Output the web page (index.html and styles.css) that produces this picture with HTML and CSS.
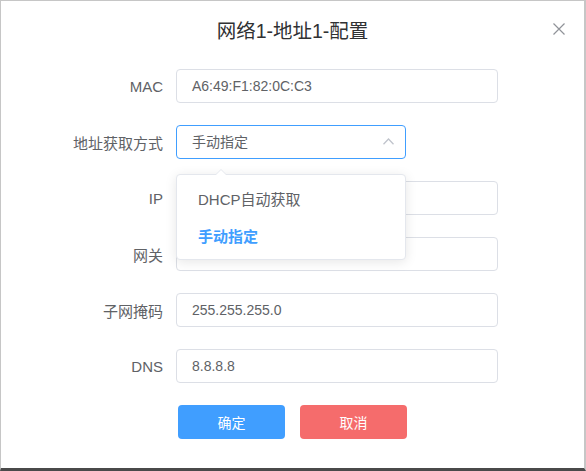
FILE: index.html
```html
<!DOCTYPE html>
<html lang="zh-CN">
<head>
<meta charset="utf-8">
<title>网络1-地址1-配置</title>
<link rel="stylesheet" href="styles.css">
</head>
<body>
<div class="dialog">
  <div class="dialog-header">
    <span class="dialog-title">网络1-地址1-配置</span>
    <button class="close-btn" aria-label="关闭">
      <svg width="12" height="12" viewBox="0 0 12 12"><path d="M0.5 0.5L11.5 11.5M11.5 0.5L0.5 11.5" stroke="#909399" stroke-width="1.2" fill="none"/></svg>
    </button>
  </div>
  <div class="form">
    <div class="form-row">
      <label class="form-label">MAC</label>
      <div class="input">A6:49:F1:82:0C:C3</div>
    </div>
    <div class="form-row">
      <label class="form-label">地址获取方式</label>
      <div class="select-wrap">
        <div class="input select is-focus">
          <span>手动指定</span>
          <svg class="chevron" width="11" height="7" viewBox="0 0 11 7"><path d="M0.5 6.2L5.5 1L10.5 6.2" stroke="#c0c4cc" stroke-width="1.3" fill="none"/></svg>
        </div>
        <div class="dropdown">
          <span class="dropdown-arrow"></span>
          <ul class="dropdown-list">
            <li class="dropdown-item">DHCP自动获取</li>
            <li class="dropdown-item is-selected">手动指定</li>
          </ul>
        </div>
      </div>
    </div>
    <div class="form-row">
      <label class="form-label">IP</label>
      <div class="input"></div>
    </div>
    <div class="form-row">
      <label class="form-label">网关</label>
      <div class="input"></div>
    </div>
    <div class="form-row">
      <label class="form-label">子网掩码</label>
      <div class="input">255.255.255.0</div>
    </div>
    <div class="form-row">
      <label class="form-label">DNS</label>
      <div class="input">8.8.8.8</div>
    </div>
    <div class="footer">
      <button class="btn btn-primary">确定</button>
      <button class="btn btn-danger">取消</button>
    </div>
  </div>
</div>
</body>
</html>
```
FILE: styles.css
```css
* { box-sizing: border-box; }
html, body { margin: 0; padding: 0; background: #ffffff; }
body {
  font-family: "Liberation Sans", "Noto Sans CJK SC", sans-serif;
  color: #606266;
}
.dialog {
  position: relative;
  width: 586px;
  height: 471px;
  background: #fff;
  border-top: 1px solid #c6c6c6;
  border-left: 1px solid #c6c6c6;
  border-right: 2px solid #c6c6c6;
  border-bottom: 3px solid #4a4a4a;
}
.dialog-header {
  padding-top: 18px;
  text-align: center;
  height: 42px;
}
.dialog-title {
  font-size: 19.5px;
  line-height: 24px;
  color: #303133;
}
.close-btn {
  position: absolute;
  top: 22px;
  right: 19px;
  width: 12px;
  height: 12px;
  padding: 0;
  border: 0;
  background: none;
  display: flex;
}
.form {
  padding-top: 26px;
}
.form-row {
  display: flex;
  align-items: center;
  height: 34px;
  margin-bottom: 22px;
}
.form-label {
  width: 175px;
  padding-right: 13px;
  text-align: right;
  font-size: 15px;
  color: #606266;
}
.input {
  width: 322px;
  height: 34px;
  border: 1px solid #dcdfe6;
  border-radius: 4px;
  padding: 0 15px;
  font-size: 14px;
  line-height: 32px;
  color: #606266;
}
.select-wrap {
  position: relative;
}
.select {
  width: 230px;
  display: flex;
  align-items: center;
  justify-content: space-between;
  padding-right: 11px;
}
.select.is-focus { border-color: #409eff; }
.chevron { display: block; margin-top: -1px; }
.dropdown {
  position: absolute;
  top: 49px;
  left: 0;
  width: 230px;
  background: #fff;
  border: 1px solid #e4e7ed;
  border-radius: 4px;
  box-shadow: 0 2px 12px rgba(0, 0, 0, 0.1);
  z-index: 10;
}
.dropdown-arrow {
  position: absolute;
  top: -6px;
  left: 38px;
  width: 0;
  height: 0;
  border-left: 6px solid transparent;
  border-right: 6px solid transparent;
  border-bottom: 6px solid #e4e7ed;
}
.dropdown-arrow::after {
  content: "";
  position: absolute;
  top: 1px;
  left: -6px;
  border-left: 6px solid transparent;
  border-right: 6px solid transparent;
  border-bottom: 6px solid #fff;
}
.dropdown-list {
  list-style: none;
  margin: 0;
  padding: 6px 0 4px;
}
.dropdown-item {
  height: 37px;
  line-height: 37px;
  padding: 0 21px;
  font-size: 15px;
  color: #606266;
}
.dropdown-item.is-selected {
  color: #409eff;
  font-weight: bold;
}
.footer {
  display: flex;
  justify-content: center;
  gap: 15px;
  margin-top: 4px;
}
.btn {
  width: 107px;
  height: 34px;
  border: 0;
  border-radius: 4px;
  color: #fff;
  font-family: inherit;
  font-size: 14px;
  padding: 0;
}
.btn-primary { background: #409eff; }
.btn-danger { background: #f56c6c; }
```
